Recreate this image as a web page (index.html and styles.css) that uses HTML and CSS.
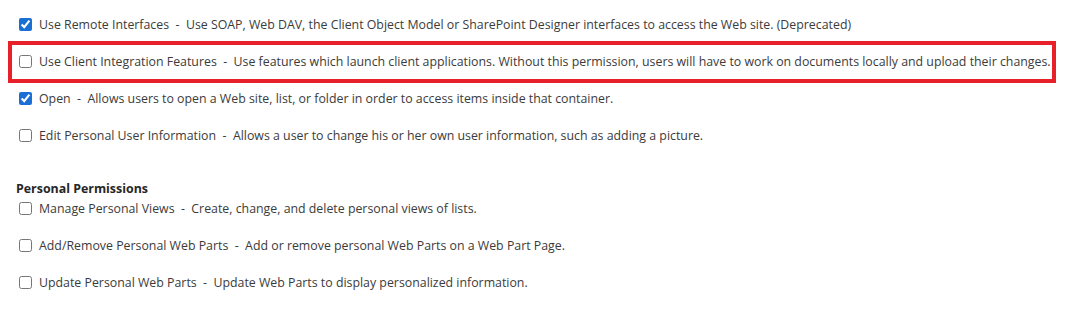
FILE: index.html
```
<!DOCTYPE html>
<html>
  <head>
    <link rel="stylesheet" href="styles.css">
  </head>
  <body>
    <main class="perms">
      <section class="group">
        <label class="perm">
          <input type="checkbox" checked>
          <span>Use Remote Interfaces&nbsp;&nbsp;-&nbsp;&nbsp;Use SOAP, Web DAV, the Client Object Model or SharePoint Designer interfaces to access the Web site. (Deprecated)</span>
        </label>
        <label class="perm flagged">
          <input type="checkbox">
          <span>Use Client Integration Features&nbsp;&nbsp;-&nbsp;&nbsp;Use features which launch client applications. Without this permission, users will have to work on documents locally and upload their changes.</span>
        </label>
        <label class="perm">
          <input type="checkbox" checked>
          <span>Open&nbsp;&nbsp;-&nbsp;&nbsp;Allows users to open a Web site, list, or folder in order to access items inside that container.</span>
        </label>
        <label class="perm">
          <input type="checkbox">
          <span>Edit Personal User Information&nbsp;&nbsp;-&nbsp;&nbsp;Allows a user to change his or her own user information, such as adding a picture.</span>
        </label>
      </section>

      <section class="group">
        <h3 class="group-title">Personal Permissions</h3>
        <label class="perm">
          <input type="checkbox">
          <span>Manage Personal Views&nbsp;&nbsp;-&nbsp;&nbsp;Create, change, and delete personal views of lists.</span>
        </label>
        <label class="perm">
          <input type="checkbox">
          <span>Add/Remove Personal Web Parts&nbsp;&nbsp;-&nbsp;&nbsp;Add or remove personal Web Parts on a Web Part Page.</span>
        </label>
        <label class="perm">
          <input type="checkbox">
          <span>Update Personal Web Parts&nbsp;&nbsp;-&nbsp;&nbsp;Update Web Parts to display personalized information.</span>
        </label>
      </section>
    </main>
  </body>
</html>
```

FILE: styles.css
```
* {
  margin: 0;
  padding: 0;
  box-sizing: border-box;
}

body {
  font-family: "Open Sans", "Noto Sans", sans-serif;
  font-size: 12.35px;
  color: #3b3b3b;
  background: #fff;
}

.perms {
  padding-top: 14px;
}

.group {
  display: flex;
  flex-direction: column;
  align-items: flex-start;
}

.group + .group {
  margin-top: 18px;
}

.group-title {
  font-size: 12.4px;
  font-weight: 700;
  line-height: 18px;
  color: #262626;
  padding-left: 16px;
}

.perm {
  display: flex;
  align-items: center;
  height: 20px;
  margin-bottom: 17px;
  padding-left: 19px;
  white-space: nowrap;
}

.perm input {
  width: 13px;
  height: 13px;
  margin: 0 7px 0 0;
  accent-color: #1a6fd6;
}

.flagged {
  height: 42px;
  width: 1048px;
  margin: -10px 0 5px 8px;
  padding: 2px 0 4px 7px;
  border: 4px solid #e8202a;
}
```
